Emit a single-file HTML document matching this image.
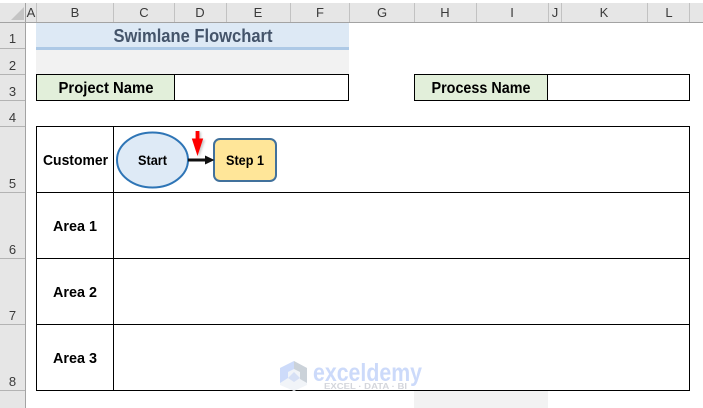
<!DOCTYPE html>
<html><head><meta charset="utf-8"><style>
html,body{margin:0;padding:0;background:#fff;width:703px;height:408px;overflow:hidden}
svg{display:block;font-family:"Liberation Sans",sans-serif}
.h{font-size:13px;fill:#3a3a3a;text-anchor:middle}
.b{font-weight:bold;fill:#000;text-anchor:middle}
</style></head><body>
<svg width="703" height="408" viewBox="0 0 703 408" xmlns="http://www.w3.org/2000/svg">
<defs><filter id="s" x="-50%" y="-50%" width="200%" height="200%"><feGaussianBlur stdDeviation="1"/></filter></defs>
<rect width="703" height="408" fill="#fff"/>
<!-- headers -->
<rect x="0" y="3" width="703" height="19" fill="#e6e6e6"/>
<rect x="0" y="3" width="25" height="405" fill="#e6e6e6"/>
<rect x="0" y="22" width="703" height="1" fill="#a3a3a3"/>
<rect x="25" y="3" width="1" height="405" fill="#a3a3a3"/>
<path d="M11 20 L24 7 L24 20 Z" fill="#c4c4c4"/>
<g fill="#c2c2c2">
<rect x="36" y="3" width="1" height="19"/><rect x="113" y="3" width="1" height="19"/><rect x="174" y="3" width="1" height="19"/><rect x="226" y="3" width="1" height="19"/><rect x="290" y="3" width="1" height="19"/><rect x="349" y="3" width="1" height="19"/><rect x="414" y="3" width="1" height="19"/><rect x="476" y="3" width="1" height="19"/><rect x="548" y="3" width="1" height="19"/><rect x="561" y="3" width="1" height="19"/><rect x="647" y="3" width="1" height="19"/><rect x="689" y="3" width="1" height="19"/>
</g>
<g fill="#b3b3b3">
<rect x="0" y="48" width="25" height="1"/><rect x="0" y="74" width="25" height="1"/><rect x="0" y="100" width="25" height="1"/><rect x="0" y="126" width="25" height="1"/><rect x="0" y="192" width="25" height="1"/><rect x="0" y="258" width="25" height="1"/><rect x="0" y="324" width="25" height="1"/><rect x="0" y="390" width="25" height="1"/>
</g>
<g class="h">
<text class="h" x="31" y="17">A</text><text class="h" x="75" y="17">B</text><text class="h" x="144" y="17">C</text><text class="h" x="200" y="17">D</text><text class="h" x="258" y="17">E</text><text class="h" x="320" y="17">F</text><text class="h" x="382" y="17">G</text><text class="h" x="445" y="17">H</text><text class="h" x="512" y="17">I</text><text class="h" x="555" y="17">J</text><text class="h" x="604" y="17">K</text><text class="h" x="669" y="17">L</text>
<text class="h" x="12.5" y="43">1</text><text class="h" x="12.5" y="70">2</text><text class="h" x="12.5" y="96">3</text><text class="h" x="12.5" y="122">4</text><text class="h" x="12.5" y="188">5</text><text class="h" x="12.5" y="254">6</text><text class="h" x="12.5" y="320">7</text><text class="h" x="12.5" y="386">8</text>
</g>
<!-- title -->
<rect x="36" y="23" width="313" height="24" fill="#dde9f5"/>
<rect x="36" y="47" width="313" height="3" fill="#adc9e6"/>
<rect x="36" y="50" width="313" height="24" fill="#f2f2f2"/>
<text x="193" y="42" font-size="18" font-weight="bold" fill="#44546a" text-anchor="middle" textLength="159" lengthAdjust="spacingAndGlyphs">Swimlane Flowchart</text>
<!-- name boxes -->
<rect x="36" y="74" width="138" height="26" fill="#e2efda"/>
<rect x="414" y="74" width="134" height="26" fill="#e2efda"/>
<g fill="none" stroke="#000" stroke-width="1">
<rect x="36.5" y="74.5" width="312" height="26"/><path d="M174.5 74V101"/>
<rect x="414.5" y="74.5" width="275" height="26"/><path d="M547.5 74V101"/>
<rect x="36.5" y="126.5" width="653" height="264"/>
<path d="M113.5 126V391M36 192.5H690M36 258.5H690M36 324.5H690"/>
</g>
<text class="b" x="106" y="93" font-size="16" textLength="95" lengthAdjust="spacingAndGlyphs">Project Name</text>
<text class="b" x="481" y="93" font-size="16" textLength="99" lengthAdjust="spacingAndGlyphs">Process Name</text>
<text class="b" x="75.5" y="165" font-size="15" textLength="65" lengthAdjust="spacingAndGlyphs">Customer</text>
<text class="b" x="75" y="231" font-size="15" textLength="44" lengthAdjust="spacingAndGlyphs">Area 1</text>
<text class="b" x="75" y="297" font-size="15" textLength="44" lengthAdjust="spacingAndGlyphs">Area 2</text>
<text class="b" x="75" y="363" font-size="15" textLength="44" lengthAdjust="spacingAndGlyphs">Area 3</text>
<!-- bottom grey -->
<rect x="414" y="391" width="134" height="17" fill="#f2f2f2"/>
<!-- shapes -->
<ellipse cx="152.5" cy="160" rx="35.5" ry="27.5" fill="#deeaf6" stroke="#2e75b6" stroke-width="2"/>
<text class="b" x="152.5" y="165" font-size="13.5" textLength="29" lengthAdjust="spacingAndGlyphs">Start</text>
<rect x="214" y="139" width="62" height="42" rx="6" fill="#ffe699" stroke="#41719c" stroke-width="2"/>
<text class="b" x="245" y="165" font-size="13.5" textLength="38" lengthAdjust="spacingAndGlyphs">Step 1</text>
<path d="M188 160H207" stroke="#111" stroke-width="3" fill="none"/>
<path d="M205 155.5 L214.5 160 L205 164.5 Z" fill="#111"/>
<path d="M197 132H201V140H205L199 157L194 140H197Z" fill="#888" opacity=".45" filter="url(#s)"/>
<path d="M195.6 131H199.4V138.5H203.2L197.5 156L191.8 138.5H195.6Z" fill="#ff0000"/>
<!-- watermark -->
<g>
<path d="M294 361L307 368V385L294 391L280 385V368Z" fill="#f1f4f8"/>
<path d="M294 361L280 368V383L288 378V372L294 369Z" fill="#cddbfa"/>
<path d="M294 361L307 368V383L300 379V372L294 369Z" fill="#cbd2d9"/>
<path d="M288 378L294 372L300 378L294 382Z" fill="#d6e0f5"/>
<text x="313" y="381" font-size="25" font-weight="bold" fill="#ccdafa" textLength="109" lengthAdjust="spacingAndGlyphs">exceldemy</text>
<text x="324" y="389" font-size="8" font-weight="bold" fill="#d4d6dc" textLength="83" lengthAdjust="spacingAndGlyphs">EXCEL · DATA · BI</text>
</g>
</svg>
</body></html>
